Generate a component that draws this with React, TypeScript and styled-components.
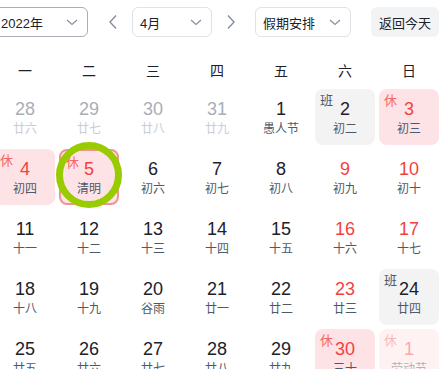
import React from "react"
import styled, { createGlobalStyle } from "styled-components"

const GlobalStyle = createGlobalStyle`
  html, body {
    margin: 0;
    padding: 0;
    background: #fff;
    overflow: hidden;
  }
  body {
    font-family: "Liberation Sans", "Noto Sans CJK SC", sans-serif;
    color: #1d2129;
  }
`

const Page = styled.div`
  width: 448px;
  height: 369px;
  overflow: hidden;
  position: relative;
`

const Calendar = styled.div`
  margin-left: -5px;
  width: 448px;
`

const Header = styled.div`
  display: flex;
  align-items: center;
  height: 30px;
  margin-top: 7px;
  margin-left: -2px;
`

const Select = styled.div<{ $width: number; $active?: boolean }>`
  box-sizing: border-box;
  width: ${(p) => p.$width}px;
  height: 30px;
  display: flex;
  align-items: center;
  justify-content: space-between;
  padding: 0 9px 0 7px;
  border: 1px solid ${(p) => (p.$active ? "#a9aeb8" : "#e0e2e7")};
  border-radius: 6px;
  font-size: 13px;
  color: #1d2129;
  background: #fff;
`

const ArrowButton = styled.div<{ $ml: number; $mr: number }>`
  width: 16px;
  height: 30px;
  margin-left: ${(p) => p.$ml}px;
  margin-right: ${(p) => p.$mr}px;
  display: flex;
  align-items: center;
  justify-content: center;
  color: #86909c;
`

const TodayButton = styled.div`
  box-sizing: border-box;
  height: 30px;
  width: 68px;
  margin-left: 20px;
  border-radius: 6px;
  background: #f2f3f5;
  color: #1d2129;
  font-size: 13px;
  display: flex;
  align-items: center;
  justify-content: center;
`

const WeekRow = styled.div`
  display: grid;
  grid-template-columns: repeat(7, 60px);
  column-gap: 4px;
  margin-top: 19px;
`

const WeekDay = styled.div`
  height: 30px;
  line-height: 30px;
  text-align: center;
  font-size: 14px;
  color: #1d2129;
`

const DayGrid = styled.div`
  display: grid;
  grid-template-columns: repeat(7, 60px);
  grid-auto-rows: 56px;
  gap: 4px;
  margin-top: 3px;
`

type Kind = "normal" | "rest" | "work"

const Cell = styled.div<{ $kind: Kind; $today?: boolean; $faded?: boolean }>`
  position: relative;
  box-sizing: border-box;
  display: flex;
  flex-direction: column;
  align-items: center;
  border-radius: 8px;
  background: ${(p) =>
    p.$kind === "rest" ? "#fde3e5" : p.$kind === "work" ? "#f3f3f4" : "transparent"};
  border: ${(p) => (p.$today ? "2px solid #f29393" : "none")};
  padding-top: ${(p) => (p.$today ? 7 : 9)}px;
  opacity: ${(p) => (p.$faded ? 0.45 : 1)};
`

const DayNum = styled.div<{ $tone: "dark" | "red" | "muted" }>`
  font-size: 18px;
  line-height: 22px;
  color: ${(p) => (p.$tone === "red" ? "#f53f3f" : p.$tone === "muted" ? "#a9aeb8" : "#1d2129")};
`

const Lunar = styled.div<{ $muted?: boolean }>`
  font-size: 12px;
  line-height: 17px;
  margin-top: 1px;
  color: ${(p) => (p.$muted ? "#c9cdd4" : "#4e5969")};
`

const Badge = styled.span<{ $kind: Kind }>`
  position: absolute;
  top: 4px;
  left: 5px;
  font-size: 13px;
  line-height: 16px;
  color: ${(p) => (p.$kind === "rest" ? "#f76560" : "#4e5969")};
`

const Ring = styled.div`
  position: absolute;
  left: 56px;
  top: 142px;
  width: 66px;
  height: 66px;
  box-sizing: border-box;
  border-radius: 50%;
  border: 7px solid #99cc00;
  pointer-events: none;
`

type Day = {
  n: number
  lunar: string
  tone?: "dark" | "red" | "muted"
  kind?: Kind
  today?: boolean
  faded?: boolean
}

const days: Day[] = [
  { n: 28, lunar: "廿六", tone: "muted" },
  { n: 29, lunar: "廿七", tone: "muted" },
  { n: 30, lunar: "廿八", tone: "muted" },
  { n: 31, lunar: "廿九", tone: "muted" },
  { n: 1, lunar: "愚人节" },
  { n: 2, lunar: "初二", kind: "work" },
  { n: 3, lunar: "初三", tone: "red", kind: "rest" },
  { n: 4, lunar: "初四", tone: "red", kind: "rest" },
  { n: 5, lunar: "清明", tone: "red", kind: "rest", today: true },
  { n: 6, lunar: "初六" },
  { n: 7, lunar: "初七" },
  { n: 8, lunar: "初八" },
  { n: 9, lunar: "初九", tone: "red" },
  { n: 10, lunar: "初十", tone: "red" },
  { n: 11, lunar: "十一" },
  { n: 12, lunar: "十二" },
  { n: 13, lunar: "十三" },
  { n: 14, lunar: "十四" },
  { n: 15, lunar: "十五" },
  { n: 16, lunar: "十六", tone: "red" },
  { n: 17, lunar: "十七", tone: "red" },
  { n: 18, lunar: "十八" },
  { n: 19, lunar: "十九" },
  { n: 20, lunar: "谷雨" },
  { n: 21, lunar: "廿一" },
  { n: 22, lunar: "廿二" },
  { n: 23, lunar: "廿三", tone: "red" },
  { n: 24, lunar: "廿四", kind: "work" },
  { n: 25, lunar: "廿五" },
  { n: 26, lunar: "廿六" },
  { n: 27, lunar: "廿七" },
  { n: 28, lunar: "廿八" },
  { n: 29, lunar: "廿九" },
  { n: 30, lunar: "三十", tone: "red", kind: "rest" },
  { n: 1, lunar: "劳动节", tone: "red", kind: "rest", faded: true },
]

const weekDays = ["一", "二", "三", "四", "五", "六", "日"]

function ChevronDown() {
  return (
    <svg width="12" height="12" viewBox="0 0 12 12" fill="none">
      <path d="M1 4l5 4.5L11 4" stroke="#86909c" strokeWidth="1.2" />
    </svg>
  )
}

function Chevron({ dir }: { dir: "left" | "right" }) {
  return (
    <svg width="10" height="16" viewBox="0 0 10 16" fill="none">
      <path
        d={dir === "left" ? "M8 1.5L2 8l6 6.5" : "M2 1.5L8 8l-6 6.5"}
        stroke="#86909c"
        strokeWidth="1.4"
      />
    </svg>
  )
}

export default function App() {
  return (
    <Page>
      <GlobalStyle />
      <Calendar>
        <Header>
          <Select $width={95} $active>
            <span>2022年</span>
            <ChevronDown />
          </Select>
          <ArrowButton $ml={17} $mr={11}>
            <Chevron dir="left" />
          </ArrowButton>
          <Select $width={80}>
            <span>4月</span>
            <ChevronDown />
          </Select>
          <ArrowButton $ml={11} $mr={16}>
            <Chevron dir="right" />
          </ArrowButton>
          <Select $width={96}>
            <span>假期安排</span>
            <ChevronDown />
          </Select>
          <TodayButton>返回今天</TodayButton>
        </Header>
        <WeekRow>
          {weekDays.map((w) => (
            <WeekDay key={w}>{w}</WeekDay>
          ))}
        </WeekRow>
        <DayGrid>
          {days.map((d, i) => {
            const kind = d.kind ?? "normal"
            return (
              <Cell key={i} $kind={kind} $today={d.today} $faded={d.faded}>
                {kind !== "normal" && <Badge $kind={kind}>{kind === "rest" ? "休" : "班"}</Badge>}
                <DayNum $tone={d.tone ?? "dark"}>{d.n}</DayNum>
                <Lunar $muted={d.tone === "muted"}>{d.lunar}</Lunar>
              </Cell>
            )
          })}
        </DayGrid>
      </Calendar>
      <Ring />
    </Page>
  )
}
